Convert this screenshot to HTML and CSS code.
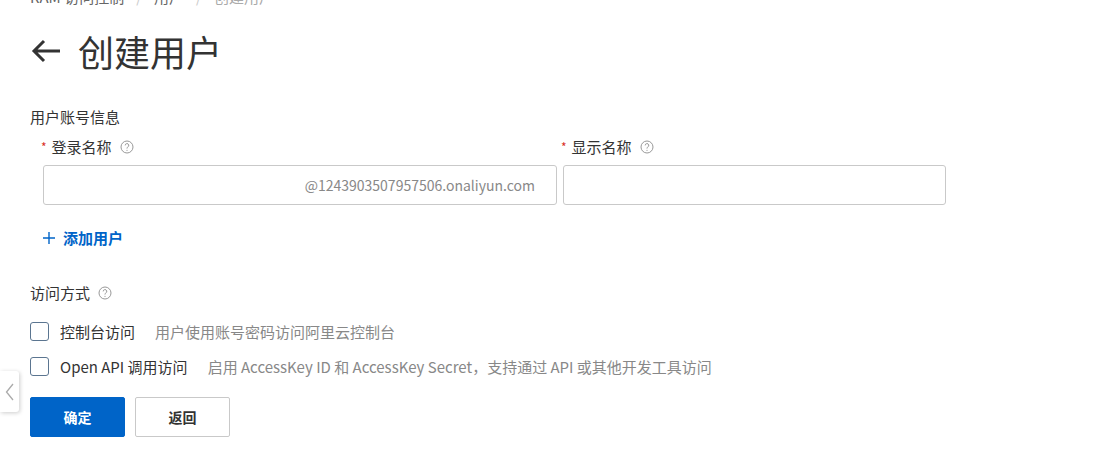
FILE: index.html
```html
<!DOCTYPE html>
<html lang="zh-CN">
<head>
    <meta charset="UTF-8">
    <title>创建用户</title>
    <link rel="stylesheet" href="styles.css">
</head>
<body>
    <div class="page">
        <div class="breadcrumb">
            <span>RAM 访问控制</span><span class="sep">/</span><span>用户</span><span class="sep">/</span><span class="current">创建用户</span>
        </div>
        <div class="header">
            <svg class="back" width="32" height="26" viewBox="0 0 32 26">
                <path d="M30 13H4M14 3L4 13l10 10" fill="none" stroke="#333" stroke-width="3"/>
            </svg>
            <h1>创建用户</h1>
        </div>

        <div class="section-title">用户账号信息</div>
        <div class="fields">
            <div class="field login">
                <div class="label"><span class="req">*</span>登录名称<span class="help"><svg width="14" height="14" viewBox="0 0 14 14"><circle cx="7" cy="7" r="6" fill="none" stroke="#999" stroke-width="1"/><path d="M5.2 5.4a1.8 1.8 0 1 1 2.6 1.6c-.6.3-.8.6-.8 1.2v.4" fill="none" stroke="#999" stroke-width="1"/><circle cx="7" cy="10.3" r=".6" fill="#999"/></svg></span></div>
                <div class="input"><span class="suffix">@1243903507957506.onaliyun.com</span></div>
            </div>
            <div class="field display">
                <div class="label"><span class="req">*</span>显示名称<span class="help"><svg width="14" height="14" viewBox="0 0 14 14"><circle cx="7" cy="7" r="6" fill="none" stroke="#999" stroke-width="1"/><path d="M5.2 5.4a1.8 1.8 0 1 1 2.6 1.6c-.6.3-.8.6-.8 1.2v.4" fill="none" stroke="#999" stroke-width="1"/><circle cx="7" cy="10.3" r=".6" fill="#999"/></svg></span></div>
                <div class="input"></div>
            </div>
        </div>
        <div class="add-user">
            <svg class="plus" width="12" height="12" viewBox="0 0 12 12"><path d="M6 0v12M0 6h12" stroke="#0064c8" stroke-width="1.4"/></svg>添加用户
        </div>

        <div class="section-title access">访问方式<span class="help"><svg width="14" height="14" viewBox="0 0 14 14"><circle cx="7" cy="7" r="6" fill="none" stroke="#999" stroke-width="1"/><path d="M5.2 5.4a1.8 1.8 0 1 1 2.6 1.6c-.6.3-.8.6-.8 1.2v.4" fill="none" stroke="#999" stroke-width="1"/><circle cx="7" cy="10.3" r=".6" fill="#999"/></svg></span></div>
        <div class="check-row first">
            <span class="checkbox"></span>
            <span class="check-label">控制台访问</span>
            <span class="check-desc">用户使用账号密码访问阿里云控制台</span>
        </div>
        <div class="check-row">
            <span class="checkbox"></span>
            <span class="check-label">Open API 调用访问</span>
            <span class="check-desc">启用 AccessKey ID 和 AccessKey Secret，支持通过 API 或其他开发工具访问</span>
        </div>

        <div class="actions">
            <button class="btn primary">确定</button>
            <button class="btn">返回</button>
        </div>
    </div>
    <div class="side-tab">
        <svg width="9" height="18" viewBox="0 0 9 18"><path d="M8 1L1.5 9 8 17" fill="none" stroke="#aaa" stroke-width="1.3"/></svg>
    </div>
</body>
</html>
```

FILE: styles.css
```css
html, body {
    margin: 0;
    padding: 0;
    background: #fff;
    color: #333;
    font-family: "Noto Sans CJK SC", "Noto Sans", sans-serif;
    font-size: 15px;
    overflow: hidden;
}
.page {
    padding-left: 30px;
}
.breadcrumb {
    margin-top: -13px;
    height: 20px;
    line-height: 20px;
    color: #666;
    display: flex;
}
.breadcrumb .sep {
    color: #ccc;
    margin: 0 12px;
}
.breadcrumb .current {
    color: #aaa;
}
.header {
    margin-top: 19px;
    height: 50px;
    display: flex;
    align-items: center;
}
.back {
    margin-right: 16px;
}
h1 {
    margin: 0;
    font-size: 36px;
    font-weight: 400;
    line-height: 50px;
    color: #333;
}
.section-title {
    margin-top: 31px;
    line-height: 20px;
    display: flex;
    align-items: center;
}
.help {
    display: inline-flex;
    margin-left: 8px;
}
.fields {
    display: flex;
    gap: 6px;
    padding-left: 13px;
    margin-top: 10px;
}
.field.login {
    width: 514px;
}
.field.display {
    width: 383px;
}
.label {
    line-height: 20px;
    display: flex;
    align-items: center;
}
.req {
    color: #d93026;
    margin-left: -2px;
    margin-right: 5px;
    font-size: 12px;
}
.input {
    margin-top: 8px;
    height: 40px;
    box-sizing: border-box;
    border: 1px solid #c9c9c9;
    border-radius: 3px;
    display: flex;
    align-items: center;
    justify-content: flex-end;
    padding-right: 21px;
}
.suffix {
    color: #888;
    font-size: 14px;
}
.add-user {
    margin-top: 23px;
    padding-left: 13px;
    line-height: 20px;
    color: #0064c8;
    font-weight: 700;
    display: flex;
    align-items: center;
}
.plus {
    margin-right: 8px;
}
.section-title.access {
    margin-top: 35px;
}
.check-row {
    display: flex;
    align-items: center;
    height: 20px;
    margin-top: 15px;
}
.check-row.first {
    margin-top: 18px;
}
.checkbox {
    width: 19px;
    height: 19px;
    box-sizing: border-box;
    border: 1px solid #5b7590;
    border-radius: 3px;
    margin-right: 11px;
}
.check-label {
    color: #333;
    margin-right: 20px;
}
.check-desc {
    color: #888;
}
.actions {
    margin-top: 21px;
    display: flex;
    gap: 10px;
}
.btn {
    width: 95px;
    height: 40px;
    border: 1px solid #c9c9c9;
    border-radius: 2px;
    background: #fff;
    color: #333;
    font-family: inherit;
    font-size: 14px;
    font-weight: 700;
}
.btn.primary {
    background: #0064c8;
    border-color: #0064c8;
    color: #fff;
}
.side-tab {
    position: absolute;
    left: 0;
    top: 371px;
    width: 19px;
    height: 41px;
    background: #fff;
    border-radius: 0 3px 3px 0;
    box-shadow: 1px 1px 4px rgba(0, 0, 0, 0.2);
    display: flex;
    align-items: center;
    justify-content: center;
}
```
